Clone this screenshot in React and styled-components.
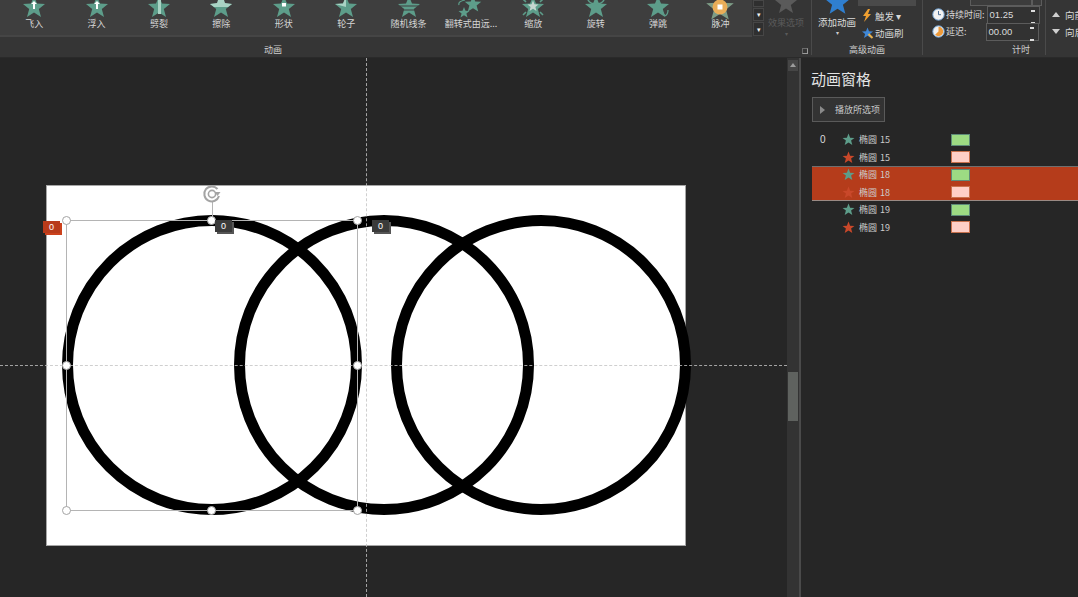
import React from 'react';
import styled, { createGlobalStyle } from 'styled-components';

const GlobalStyle = createGlobalStyle`
  html, body { margin: 0; padding: 0; background: #262626; overflow: hidden; }
  * { box-sizing: border-box; }
`;

const FONT = `"Noto Sans CJK SC", "Liberation Sans", sans-serif`;
const STAR = '12,1 15,8.6 23,9 16.8,14 19,22 12,17.5 5,22 7.2,14 1,9 9,8.6';

const Page = styled.div`
  width: 1078px;
  height: 597px;
  display: flex;
  flex-direction: column;
  overflow: hidden;
  background: #262626;
  font-family: ${FONT};
`;

const Ribbon = styled.div`
  height: 58px;
  flex: none;
  display: flex;
  background: #353535;
  border-bottom: 1px solid #2a2a2a;
  color: #d8d8d8;
`;

const Group = styled.div`
  width: ${(p) => p.$w}px;
  flex: none;
  display: flex;
  flex-direction: column;
  position: relative;
  border-right: ${(p) => (p.$noline ? 'none' : '1px solid #4a4a4a')};
  margin-bottom: 2px;
`;

const GroupBody = styled.div`
  height: 41px;
  flex: none;
  display: flex;
  overflow: hidden;
`;

const GroupLabel = styled.div`
  height: 14px;
  line-height: 18px;
  font-size: 9px;
  text-align: center;
  color: #cfcfcf;
  padding-left: ${(p) => p.$pl || 0}px;
  padding-right: ${(p) => p.$pr || 0}px;
`;

const Launcher = styled.div`
  position: absolute;
  right: 3px;
  bottom: 1px;
  width: 6px;
  height: 6px;
  border: 1px solid #9a9a9a;
  border-top-color: #6a6a6a;
  border-left-color: #6a6a6a;
`;

const Gallery = styled.div`
  width: 752px;
  height: 37px;
  flex: none;
  background: #3e3e3e;
  border-bottom: 2px solid #454545;
  display: flex;
  padding-left: 3px;
`;

const Effect = styled.div`
  width: 62.4px;
  flex: none;
  position: relative;
  text-align: center;
  font-size: 9px;
  line-height: 12px;
  color: #d6d6d6;
  white-space: nowrap;
  svg { position: absolute; left: 50%; top: -5px; margin-left: -12px; overflow: visible; }
  span { position: absolute; left: 0; right: 0; top: 18px; }
`;

const Spinners = styled.div`
  width: 11px;
  flex: none;
  margin-left: 1px;
  display: flex;
  flex-direction: column;
  gap: 1px;
`;

const SpinBtn = styled.div`
  height: ${(p) => p.$h}px;
  flex: none;
  background: #2f2f2f;
  border: 1px solid #464646;
  color: #f0f0f0;
  font-size: 7px;
  line-height: ${(p) => p.$h - 2}px;
  text-align: center;
`;

const Disabled = styled.div`
  width: 44px;
  flex: none;
  position: relative;
  color: #5b5b5b;
  font-size: 9px;
  text-align: center;
  white-space: nowrap;
  span { position: absolute; left: 0; width: 100%; top: 16px; }
  i { position: absolute; left: 0; width: 100%; top: 29px; font-style: normal; font-size: 6px; }
  svg { position: absolute; left: 10px; top: -9px; }
`;

const AddColumn = styled.div`
  width: 50px;
  flex: none;
  font-size: 9.5px;
  text-align: center;
  position: relative;
  white-space: nowrap;
  span { position: absolute; left: 0; right: 0; top: 16px; line-height: 13px; color: #dcdcdc; }
  i { position: absolute; left: 0; right: 0; top: 28px; font-style: normal; font-size: 6px; color: #ccc; }
  svg { position: absolute; left: 12px; top: -11px; }
`;

const TinyColumn = styled.div`
  display: flex;
  flex-direction: column;
  font-size: 9.5px;
  color: #d8d8d8;
`;

const TinyRow = styled.div`
  height: ${(p) => p.$h}px;
  flex: none;
  display: flex;
  align-items: center;
  gap: ${(p) => p.$gap ?? 2}px;
  margin-left: ${(p) => p.$ml || 0}px;
  white-space: nowrap;
`;

const GalleryPick = styled.div`
  height: 6px;
  width: 58px;
  margin-left: -4px;
  flex: none;
  background: #4a4a4a;
`;

const TimingRow = styled.div`
  height: 17px;
  flex: none;
  display: flex;
  align-items: center;
  gap: 1px;
  font-size: 9px;
  color: #d8d8d8;
  white-space: nowrap;
  padding-left: 9px;
`;

const TopStubs = styled.div`
  height: 6px;
  flex: none;
  display: flex;
  padding-left: 47px;
`;

const Stub = styled.div`
  width: ${(p) => p.$w}px;
  height: 6px;
  border: 1px solid #5c5c5c;
  border-top: 0;
  background: #3c3c3c;
`;

const Spin = styled.div`
  width: 53px;
  height: 18px;
  flex: none;
  margin-left: ${(p) => p.$ml || 0}px;
  border: 1px solid #5c5c5c;
  background: #323232;
  font-size: 9.5px;
  font-family: "Liberation Sans", sans-serif;
  color: #dcdcdc;
  line-height: 16px;
  padding-left: 2px;
  position: relative;
  &::after {
    content: '';
    position: absolute;
    right: 4px;
    top: 3px;
    width: 4px;
    height: 10px;
    border-top: 2px solid #ddd;
    border-bottom: 2px solid #ddd;
  }
`;

const OrderRow = styled(TimingRow)`
  padding-left: 6px;
  gap: 4px;
  font-size: 9.5px;
  &::before {
    content: '';
    border-left: 4px solid transparent;
    border-right: 4px solid transparent;
    ${(p) => (p.$down ? 'border-top: 5px solid #cfcfcf;' : 'border-bottom: 5px solid #cfcfcf;')}
    margin-right: 1px;
  }
`;

const Main = styled.div`
  flex: 1;
  display: flex;
  min-height: 0;
`;

const Canvas = styled.div`
  width: 787px;
  flex: none;
  position: relative;
  background: #262626;
`;

const Slide = styled.div`
  position: absolute;
  left: 45.5px;
  top: 126.5px;
  width: 640px;
  height: 361px;
  background: #ffffff;
  border: 1px solid #a6a6a6;
`;

const Rings = styled.svg`
  position: absolute;
  left: 0;
  top: 0;
  overflow: visible;
`;

const Guide = styled.div`
  position: absolute;
  ${(p) =>
    p.$vertical
      ? `left: 365.5px; top: 0; height: 539px; border-left: 1px dashed rgba(195, 195, 195, 0.8);`
      : `left: 0; top: 307px; width: 787px; border-top: 1px dashed rgba(195, 195, 195, 0.8);`}
`;

const Selection = styled.div`
  position: absolute;
  left: 66px;
  top: 162px;
  width: 292px;
  height: 291px;
  border: 1px solid #b4b4b4;
`;

const Handle = styled.div`
  position: absolute;
  width: 9px;
  height: 9px;
  border-radius: 50%;
  background: #fff;
  border: 1.5px solid #a4a4a4;
  left: ${(p) => p.$x}px;
  top: ${(p) => p.$y}px;
  margin: -5px 0 0 -5px;
`;

const RotateStem = styled.div`
  position: absolute;
  left: 145px;
  top: -19px;
  height: 19px;
  border-left: 1px solid #b4b4b4;
`;

const RotateIcon = styled.svg`
  position: absolute;
  left: 135px;
  top: -37px;
`;

const Tag = styled.div`
  position: absolute;
  left: ${(p) => p.$x}px;
  top: ${(p) => p.$y}px;
  width: 17px;
  height: 12px;
  background: ${(p) => (p.$active ? '#b83b1b' : '#3a3a3a')};
  color: #fff;
  font-size: 9px;
  font-family: "Liberation Sans", sans-serif;
  line-height: 12px;
  text-align: center;
  box-shadow: 2px 2px 0 ${(p) => (p.$active ? '#cc421d' : '#555555')};
`;

const Scrollbar = styled.div`
  width: 14px;
  flex: none;
  background: #333333;
  border-right: 2px solid #4a4a4a;
  position: relative;
`;

const ScrollArrow = styled.div`
  height: 11px;
  margin: 2px 1px 0 1px;
  background: #464646;
  position: relative;
  &::after {
    content: '';
    position: absolute;
    left: 2px;
    top: 3px;
    border: 3px solid transparent;
    border-top: 0;
    border-bottom: 4px solid #9c9c9c;
  }
`;

const ScrollThumb = styled.div`
  position: absolute;
  left: 1px;
  top: 314px;
  width: 10px;
  height: 49px;
  background: #5f625f;
`;

const Pane = styled.div`
  flex: 1;
  padding-left: 10px;
  background: #262626;
`;

const PaneTitle = styled.div`
  margin-top: 9px;
  height: 24px;
  line-height: 24px;
  font-size: 15px;
  color: #e4e4e4;
`;

const PlayButton = styled.div`
  margin-top: 6px;
  margin-left: 1px;
  width: 73px;
  height: 25px;
  border: 1px solid #5a5a5a;
  background: #333333;
  display: flex;
  align-items: center;
  font-size: 9px;
  color: #c8c8c8;
  padding-left: 7px;
  gap: 10px;
  white-space: nowrap;
  &::before {
    content: '';
    border-left: 5px solid #8a8a8a;
    border-top: 4px solid transparent;
    border-bottom: 4px solid transparent;
  }
`;

const AnimList = styled.div`
  margin-top: 9px;
  margin-left: 1px;
`;

const AnimGroup = styled.div`
  background: ${(p) => (p.$selected ? '#b53c1b' : 'transparent')};
  box-shadow: ${(p) => (p.$selected ? 'inset 0 1px 0 #6f6f6f, inset 0 -1px 0 #9a8a84' : 'none')};
`;

const AnimRow = styled.div`
  height: 17.5px;
  display: grid;
  grid-template-columns: 30px 17px 92px 20px;
  align-items: center;
  font-size: 9px;
  color: #cdcdcd;
`;

const Order = styled.div`
  padding-left: 8px;
  font-size: 10px;
  font-family: "Liberation Sans", sans-serif;
  color: #dcdcdc;
`;

const RowLabel = styled.div`
  white-space: nowrap;
  word-spacing: 1px;
`;

const Swatch = styled.div`
  width: 19px;
  height: 12px;
  background: ${(p) => (p.$in ? '#9ddb83' : '#ffcfc7')};
  border: 1px solid ${(p) => (p.$in ? '#5d8a78' : '#c8714d')};
`;

const effects = [
  { name: '飞入', mark: 'arrow' },
  { name: '浮入', mark: 'arrow' },
  { name: '劈裂', mark: 'split' },
  { name: '擦除', mark: 'wipe' },
  { name: '形状', mark: 'dot' },
  { name: '轮子', mark: 'wheel' },
  { name: '随机线条', mark: 'lines' },
  { name: '翻转式由远...', mark: 'flip' },
  { name: '缩放', mark: 'zoom' },
  { name: '旋转', mark: 'spin' },
  { name: '弹跳', mark: 'bounce' },
  { name: '脉冲', mark: 'pulse' },
];

const anims = [
  [{ order: '0', kind: 'in', label: '椭圆 15' }, { kind: 'out', label: '椭圆 15' }],
  [{ kind: 'in', label: '椭圆 18' }, { kind: 'out', label: '椭圆 18' }],
  [{ kind: 'in', label: '椭圆 19' }, { kind: 'out', label: '椭圆 19' }],
];

const EffectIcon = ({ mark }) => {
  if (mark === 'pulse') {
    return (
      <svg width="24" height="24" viewBox="0 0 24 24">
        <polygon points={STAR} fill="#7d9c86" transform="translate(-3 -3) scale(1.25)" />
        <circle cx="12" cy="12" r="7.5" fill="#e9ad58" />
        <rect x="9.5" y="9.5" width="5" height="5" fill="#fff" />
      </svg>
    );
  }
  if (mark === 'flip') {
    return (
      <svg width="24" height="24" viewBox="0 0 24 24">
        <polygon points={STAR} fill="#5d9d8a" transform="translate(5 0) scale(0.75)" />
        <polygon points={STAR} fill="#5d9d8a" transform="translate(-1 11.5) scale(0.5)" />
        <path d="M0 10C-1 7 2 6 6 5" fill="none" stroke="#5d9d8a" strokeWidth="1.2" />
      </svg>
    );
  }
  return (
    <svg width="24" height="24" viewBox="0 0 24 24">
      <polygon points={STAR} fill="#5d9d8a" />
      {mark === 'arrow' && <path d="M12 6l3 3h-2v5h-2V9H9z" fill="#fff" />}
      {mark === 'split' && <rect x="11" y="1" width="3" height="18" fill="#a9d3c4" />}
      {mark === 'wipe' && <polygon points="9,5 15,5 16,8 23,9 19,12 5,12 1,9 8,8" fill="#a9d3c4" />}
      {mark === 'dot' && <rect x="10" y="8" width="4" height="3.5" fill="#fff" />}
      {mark === 'wheel' && <polygon points="1,9 9,8.6 12,1 12,12" fill="#a9d3c4" />}
      {mark === 'lines' && <path d="M3 11h18M6 15h12" stroke="#3e3e3e" strokeWidth="1.2" />}
      {mark === 'zoom' && (
        <>
          <polygon points={STAR} fill="#c6d6d0" transform="translate(6 5) scale(0.5)" />
          <path d="M2 4l3 3M22 4l-3 3M2 20l3-3M22 20l-3-3" stroke="#5d9d8a" strokeWidth="1.6" />
        </>
      )}
      {mark === 'spin' && <path d="M3 2c1 5 5 7 9 7s8-2 9-7" fill="none" stroke="#5d9d8a" strokeWidth="1.4" />}
      {mark === 'bounce' && <path d="M19 21c2-1 3-3 3-6M16 16c1 2 2 3 3 5" fill="none" stroke="#5d9d8a" strokeWidth="1.3" />}
    </svg>
  );
};

const ClockIcon = ({ kind }) => (
  <svg width="13" height="13" viewBox="0 0 13 13">
    <circle cx="6.5" cy="6.5" r="5.7" fill="#f2f2f2" stroke="#6e9fd0" strokeWidth="1" />
    {kind === 'delay' ? (
      <path d="M6.5 6.5V1.8a4.7 4.7 0 0 1 0 9.4 4.7 4.7 0 0 1-3.4-1.4z" fill="#ee9a3a" />
    ) : (
      <path d="M6.5 3v3.7H9" fill="none" stroke="#4d6f96" strokeWidth="1" />
    )}
  </svg>
);

const App = () => (
  <Page>
    <GlobalStyle />
    <Ribbon>
      <Group $w={812}>
        <GroupBody>
          <Gallery>
            {effects.map((e) => (
              <Effect key={e.name}>
                <EffectIcon mark={e.mark} />
                <span>{e.name}</span>
              </Effect>
            ))}
          </Gallery>
          <Spinners>
            <SpinBtn $h={7} />
            <SpinBtn $h={13}>▾</SpinBtn>
            <SpinBtn $h={14}>▾</SpinBtn>
          </Spinners>
          <Disabled>
            <svg width="24" height="24" viewBox="0 0 24 24">
              <polygon points={STAR} fill="#5a5a5a" />
            </svg>
            <span>效果选项</span>
            <i>▾</i>
          </Disabled>
        </GroupBody>
        <GroupLabel $pr={265}>动画</GroupLabel>
        <Launcher />
      </Group>
      <Group $w={111}>
        <GroupBody>
          <AddColumn>
            <svg width="27" height="27" viewBox="0 0 24 24">
              <polygon points={STAR} fill="#2f7fd0" />
            </svg>
            <span>添加动画</span>
            <i>▾</i>
          </AddColumn>
          <TinyColumn>
            <GalleryPick />
            <TinyRow $h={19}>
              <svg width="11" height="13" viewBox="0 0 11 13">
                <path d="M6 0L1 7h3L2 13l7-8H6l2-5z" fill="#f0a030" />
              </svg>
              触发 ▾
            </TinyRow>
            <TinyRow $h={15} $ml={-1} $gap={1}>
              <svg width="13" height="12" viewBox="0 0 24 24">
                <polygon points={STAR} fill="#3f87d6" />
                <path d="M14 14l8 8" stroke="#e8b04a" strokeWidth="4" />
              </svg>
              动画刷
            </TinyRow>
          </TinyColumn>
        </GroupBody>
        <GroupLabel>高级动画</GroupLabel>
      </Group>
      <Group $w={123}>
        <GroupBody>
          <TinyColumn>
            <TopStubs>
              <Stub $w={62} />
              <Stub $w={10} />
            </TopStubs>
            <TimingRow>
              <ClockIcon />
              持续时间:
              <Spin $ml={1}>01.25</Spin>
            </TimingRow>
            <TimingRow>
              <ClockIcon kind="delay" />
              延迟:
              <Spin $ml={18}>00.00</Spin>
            </TimingRow>
          </TinyColumn>
        </GroupBody>
        <GroupLabel $pl={74}>计时</GroupLabel>
      </Group>
      <Group $w={32} $noline>
        <GroupBody>
          <TinyColumn>
            <TopStubs />
            <OrderRow>向前</OrderRow>
            <OrderRow $down>向后</OrderRow>
          </TinyColumn>
        </GroupBody>
      </Group>
    </Ribbon>
    <Main>
      <Canvas>
        <Slide />
        <Rings width="787" height="539">
          <g fill="none" stroke="#000" strokeWidth="11">
            <circle cx="212" cy="307" r="144.5" />
            <circle cx="384" cy="307" r="144.5" />
            <circle cx="541" cy="307" r="144.5" />
          </g>
        </Rings>
        <Guide $vertical />
        <Guide />
        <Selection>
          <RotateStem />
          <RotateIcon width="20" height="20" viewBox="0 0 20 20">
            <path d="M15.5 5A7.5 7.5 0 1 0 17 12" fill="none" stroke="#a4a4a4" strokeWidth="2" />
            <circle cx="10" cy="10" r="3.6" fill="none" stroke="#a4a4a4" strokeWidth="1.6" />
            <path d="M12.5 8h6l-3 4z" fill="#a4a4a4" />
          </RotateIcon>
          <Handle $x={0} $y={0} />
          <Handle $x={145} $y={0} />
          <Handle $x={291} $y={0} />
          <Handle $x={0} $y={145} />
          <Handle $x={291} $y={145} />
          <Handle $x={0} $y={290} />
          <Handle $x={145} $y={290} />
          <Handle $x={291} $y={290} />
        </Selection>
        <Tag $x={43} $y={163} $active>0</Tag>
        <Tag $x={215} $y={162}>0</Tag>
        <Tag $x={372} $y={162}>0</Tag>
      </Canvas>
      <Scrollbar>
        <ScrollArrow />
        <ScrollThumb />
      </Scrollbar>
      <Pane>
        <PaneTitle>动画窗格</PaneTitle>
        <PlayButton>播放所选项</PlayButton>
        <AnimList>
          {anims.map((group, i) => (
            <AnimGroup key={i} $selected={i === 1}>
              {group.map((a) => (
                <AnimRow key={a.kind + a.label}>
                  <Order>{a.order}</Order>
                  <svg width="13" height="13" viewBox="0 0 24 24">
                    <polygon points={STAR} fill={a.kind === 'in' ? '#5d9d8a' : '#c9482a'} />
                  </svg>
                  <RowLabel>{a.label}</RowLabel>
                  <Swatch $in={a.kind === 'in'} />
                </AnimRow>
              ))}
            </AnimGroup>
          ))}
        </AnimList>
      </Pane>
    </Main>
  </Page>
);

export default App;
